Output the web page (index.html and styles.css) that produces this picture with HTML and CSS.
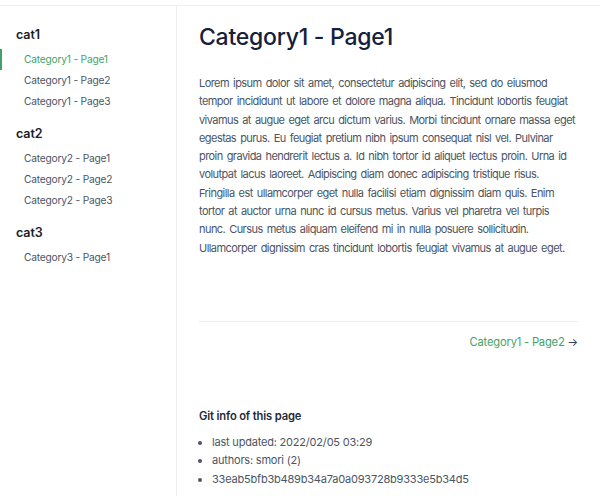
FILE: index.html
```html
<!DOCTYPE html>
<html>
<head>
<meta charset="utf-8">
<link rel="stylesheet" href="styles.css">
</head>
<body>
<div class="topbar"></div>
<div class="layout">
  <nav class="sidebar">
    <div class="group">
      <div class="cat">cat1</div>
      <a class="link active">Category1 - Page1</a>
      <a class="link">Category1 - Page2</a>
      <a class="link">Category1 - Page3</a>
    </div>
    <div class="group">
      <div class="cat">cat2</div>
      <a class="link">Category2 - Page1</a>
      <a class="link">Category2 - Page2</a>
      <a class="link">Category2 - Page3</a>
    </div>
    <div class="group">
      <div class="cat">cat3</div>
      <a class="link">Category3 - Page1</a>
    </div>
  </nav>
  <main class="main">
    <h1 class="title">Category1 - Page1</h1>
    <p class="body">Lorem ipsum dolor sit amet, consectetur adipiscing elit, sed do eiusmod tempor incididunt ut labore et dolore magna aliqua. Tincidunt lobortis feugiat vivamus at augue eget arcu dictum varius. Morbi tincidunt ornare massa eget egestas purus. Eu feugiat pretium nibh ipsum consequat nisl vel. Pulvinar proin gravida hendrerit lectus a. Id nibh tortor id aliquet lectus proin. Urna id volutpat lacus laoreet. Adipiscing diam donec adipiscing tristique risus. Fringilla est ullamcorper eget nulla facilisi etiam dignissim diam quis. Enim tortor at auctor urna nunc id cursus metus. Varius vel pharetra vel turpis nunc. Cursus metus aliquam eleifend mi in nulla posuere sollicitudin. Ullamcorper dignissim cras tincidunt lobortis feugiat vivamus at augue eget.</p>
    <div class="pager">
      <a class="next">Category1 - Page2 <span class="arrow">→</span></a>
    </div>
    <section class="git">
      <h2 class="git-title">Git info of this page</h2>
      <ul class="git-list">
        <li>last updated: 2022/02/05 03:29</li>
        <li>authors: smori (2)</li>
        <li>33eab5bfb3b489b34a7a0a093728b9333e5b34d5</li>
      </ul>
    </section>
  </main>
</div>
</body>
</html>
```
FILE: styles.css
```css
* { box-sizing: border-box; }
html, body { margin: 0; padding: 0; background: #fff; }
body {
  font-family: Inter, "Noto Sans", sans-serif;
  color: #4b5563;
  overflow: hidden;
  height: 496px;
}
.topbar {
  height: 6px;
  border-bottom: 1px solid #eef0f2;
}
.layout {
  display: flex;
  height: 490px;
}
.sidebar {
  width: 177px;
  flex: none;
  border-right: 1px solid #eef0f2;
  padding-top: 20px;
}
.group { margin-bottom: 13px; }
.cat {
  font-size: 12.5px;
  font-weight: 600;
  color: #1a202c;
  padding-left: 16px;
  height: 18px;
  line-height: 18px;
  margin-bottom: 5px;
  letter-spacing: -0.1px;
}
.link {
  display: block;
  font-size: 10.2px;
  letter-spacing: -0.2px;
  color: #4b5563;
  padding-left: 22px;
  height: 21px;
  line-height: 21px;
  border-left: 2px solid transparent;
}
.link.active {
  color: #3fa368;
  border-left-color: #3fa368;
}
.main {
  flex: 1;
  padding: 16px 22px 0 22px;
}
.title {
  margin: 0;
  font-size: 23px;
  font-weight: 500;
  color: #15203a;
  line-height: 30px;
  letter-spacing: -0.25px;
}
.body {
  margin: 22px 0 0 0;
  font-size: 11px;
  letter-spacing: -0.56px;
  word-spacing: 1.5px;
  line-height: 18.3px;
  color: #4b5563;
}
.pager {
  margin-top: 64px;
  border-top: 1px solid #eceef0;
  padding-top: 12px;
  display: flex;
  justify-content: flex-end;
}
.next {
  font-size: 11.2px;
  letter-spacing: -0.2px;
  color: #3fa368;
  line-height: 16px;
}
.arrow { color: #374151; }
.git { margin-top: 58px; }
.git-title {
  margin: 0;
  font-size: 11.2px;
  letter-spacing: -0.15px;
  font-weight: 600;
  color: #1f2937;
  line-height: 16px;
}
.git-list {
  margin: 9px 0 0 0;
  padding-left: 13px;
  font-size: 11px;
  letter-spacing: -0.2px;
  line-height: 18.5px;
  color: #4b5563;
}
```
